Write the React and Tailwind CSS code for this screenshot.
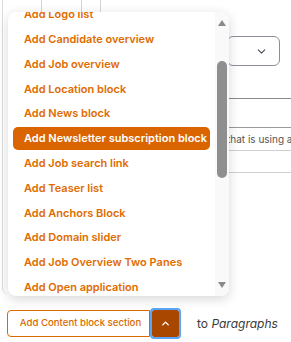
import { ChevronDown, ChevronUp } from "lucide-react";

const items = [
  "Add Logo list",
  "Add Candidate overview",
  "Add Job overview",
  "Add Location block",
  "Add News block",
  "Add Newsletter subscription block",
  "Add Job search link",
  "Add Teaser list",
  "Add Anchors Block",
  "Add Domain slider",
  "Add Job Overview Two Panes",
  "Add Open application",
];

export default function App() {
  return (
    <div className="relative w-[291px] h-[342px] overflow-hidden bg-white font-['Inter',sans-serif]">
      {/* Page behind the menu */}
      <div className="ml-[2px] h-[294px] border-l border-[#dcdcdc] rounded-bl-[6px]">
        <div className="flex h-[12px]">
          <div className="w-[39px] border-r border-[#d4d4d4]" />
          <div className="w-[40px] border-r border-[#d4d4d4]" />
          <div className="w-[19px] border-r border-[#d4d4d4]" />
        </div>
        <div className="flex">
          <div className="w-[224px] shrink-0" />
          <div className="flex-1">
            <div className="mt-[24px] mr-[12px] h-[30px] border border-[#8e8e9a] rounded-[6px] flex items-center justify-end pr-[11px]">
              <ChevronDown className="w-[13px] h-[13px] text-[#4a4a5a]" strokeWidth={2} />
            </div>
            <div className="mt-[32px] border-t border-[#8a8a8a]" />
            <div className="mt-[28px] border-t border-[#9a9a9a]" />
            <div className="h-[22px] flex items-center text-[10px] text-[#555] whitespace-nowrap overflow-hidden">
              that is using a
            </div>
            <div className="border-t border-[#cfcfcf]" />
            <div className="mt-[21px] border-t border-[#cfcfcf]" />
          </div>
        </div>
      </div>

      {/* Bottom action row */}
      <div className="flex items-center mt-[16px] pl-[7px]">
        <button className="h-[27px] w-[143px] border border-[#d96a00] rounded-l-[4px] text-[9.6px] font-medium text-[#d96a00] flex items-center justify-center pl-[4px]">
          Add Content block section
        </button>
        <button className="h-[27px] w-[27px] ml-[2px] bg-[#a94700] rounded-[2px] outline-2 outline-[#5aa5f5] flex items-center justify-center">
          <ChevronUp className="w-[11px] h-[11px] text-white" strokeWidth={3} />
        </button>
        <span className="ml-[18px] text-[12px] text-[#3a3a3a]">
          to <em className="italic">Paragraphs</em>
        </span>
      </div>

      {/* Open dropdown menu */}
      <div className="absolute left-[8px] top-[12px] w-[221px] h-[284px] bg-white rounded-[8px] shadow-[0_3px_12px_rgba(0,0,0,0.16)] flex overflow-hidden">
        <ul className="flex-1 min-w-0 mt-[-10px] pl-[5px] pr-[5px]">
          {items.map((label) => {
            const active = label === "Add Newsletter subscription block";
            return (
              <li key={label} className="h-[24.8px] py-[1px]">
                <div
                  className={
                    active
                      ? "h-full flex items-center pl-[11px] rounded-[5px] bg-[#d96400] text-white text-[11px] font-semibold whitespace-nowrap"
                      : "h-full flex items-center pl-[11px] text-[#e06c00] text-[11px] font-semibold whitespace-nowrap"
                  }
                >
                  {label}
                </div>
              </li>
            );
          })}
        </ul>
        <div className="w-[14px] shrink-0 bg-[#f9f9f9] flex flex-col items-center pt-[8px]">
          <div className="w-0 h-0 border-l-[4.5px] border-r-[4.5px] border-b-[6px] border-l-transparent border-r-transparent border-b-[#8a8a8a]" />
          <div className="mt-[35px] w-[10px] h-[117px] rounded-full bg-[#8f8f8f]" />
          <div className="mt-auto mb-[8px] w-0 h-0 border-l-[4.5px] border-r-[4.5px] border-t-[6px] border-l-transparent border-r-transparent border-t-[#8a8a8a]" />
        </div>
      </div>
    </div>
  );
}
